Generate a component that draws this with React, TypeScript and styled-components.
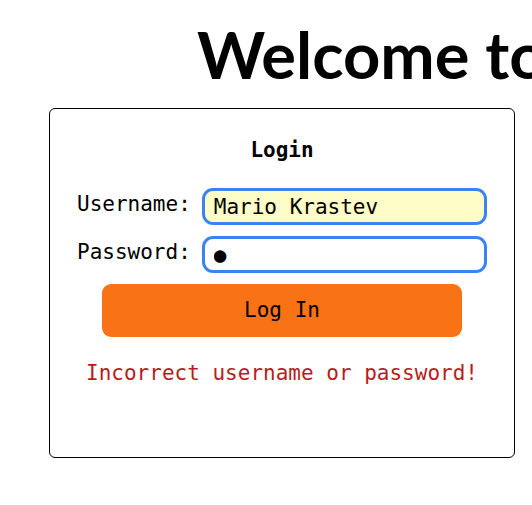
import React from 'react';
import styled, { createGlobalStyle } from 'styled-components';

const GlobalStyle = createGlobalStyle`
  html, body {
    margin: 0;
    padding: 0;
    background: #ffffff;
    overflow: hidden;
  }

  body {
    font-family: 'DejaVu Sans Mono', monospace;
    color: #000000;
  }
`;

const Page = styled.div`
  width: 532px;
  height: 505px;
  overflow: hidden;
`;

const Heading = styled.h1`
  margin: 0;
  padding: 22px 0 0 197px;
  height: 64px;
  font-family: Lato, 'Noto Sans', sans-serif;
  font-size: 65px;
  font-weight: 700;
  line-height: 64px;
  white-space: nowrap;
`;

const Card = styled.div`
  box-sizing: border-box;
  width: 466px;
  height: 350px;
  margin: 22px 0 0 49px;
  padding: 29px 27px 0;
  border: 1px solid #000000;
  border-radius: 6px;
  display: flex;
  flex-direction: column;
`;

const Title = styled.div`
  font-size: 21px;
  font-weight: 700;
  line-height: 24px;
  text-align: center;
`;

const Fields = styled.div`
  margin-top: 26px;
  display: grid;
  grid-template-columns: auto 1fr;
  column-gap: 11px;
  row-gap: 11px;
  align-items: center;
`;

const Label = styled.label`
  margin-top: -6px;
  font-size: 21px;
  line-height: 24px;
`;

const Input = styled.input<{ $filled?: boolean }>`
  box-sizing: border-box;
  width: 100%;
  height: 37px;
  margin: 0;
  padding: 0 8px 0 9px;
  border: 3px solid #3b82f6;
  border-radius: 11px;
  background: ${(p) => (p.$filled ? '#fefcc7' : '#ffffff')};
  font-family: 'DejaVu Sans Mono', monospace;
  font-size: 21px;
  color: #000000;
  outline: none;
`;

const Button = styled.button`
  align-self: center;
  width: 360px;
  height: 53px;
  margin-top: 11px;
  padding: 0 0 2px;
  border: none;
  border-radius: 9px;
  background: #f97316;
  font-family: 'DejaVu Sans Mono', monospace;
  font-size: 21px;
  color: #000000;
  cursor: pointer;
`;

const ErrorText = styled.div`
  margin-top: 24px;
  font-size: 21px;
  line-height: 24px;
  text-align: center;
  color: #b91c1c;
`;

export default function App() {
  return (
    <Page>
      <GlobalStyle />
      <Heading>Welcome to Chat</Heading>
      <Card>
        <Title>Login</Title>
        <Fields>
          <Label htmlFor="username">Username:</Label>
          <Input id="username" type="text" defaultValue="Mario Krastev" $filled />
          <Label htmlFor="password">Password:</Label>
          <Input id="password" type="text" defaultValue="●" aria-label="password" />
        </Fields>
        <Button type="button">Log In</Button>
        <ErrorText>Incorrect username or password!</ErrorText>
      </Card>
    </Page>
  );
}
